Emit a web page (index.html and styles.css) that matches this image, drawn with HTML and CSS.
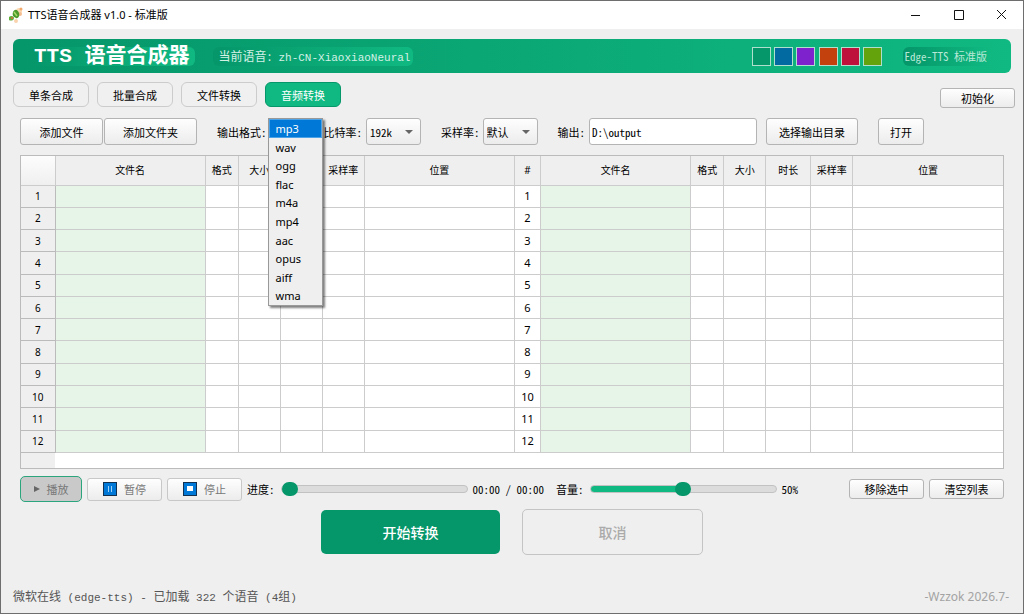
FILE: index.html
```html
<!DOCTYPE html>
<html lang="zh-CN">
<head>
    <meta charset="UTF-8">
    <meta name="viewport" content="width=device-width, initial-scale=1.0">
    <title>TTS语音合成器 v1.0 - 标准版</title>
    <link rel="stylesheet" href="styles.css">
</head>
<body>
    <header class="titlebar">
        <svg class="app-icon" width="16" height="16" viewBox="0 0 16 16">
            <circle cx="11" cy="4" r="3" fill="#fbd9b4"/>
            <circle cx="13" cy="2" r="1.5" fill="#f3a86c"/>
            <circle cx="12" cy="7" r="2" fill="#f6bd90"/>
            <path d="M5 5C7 1 10 3 11 6C12 9 10 12 8 11C5 10 4 8 5 5Z" fill="#4b9a2b"/>
            <path d="M6 5L9 9" stroke="#a9d86a" stroke-width="1.5"/>
            <path d="M1 10C3 8 6 9 6 11C6 14 2 14 1 13Z" fill="#5fae3c"/>
            <circle cx="4" cy="11" r="1" fill="#e8623c"/>
            <circle cx="8" cy="14" r="2" fill="#fad2ae"/>
        </svg>
        <h1>TTS语音合成器 v1.0 - 标准版</h1>
        <div class="window-controls">
            <button type="button" aria-label="最小化"><svg width="11" height="11" viewBox="0 0 11 11"><path d="M1 5.5H10"/></svg></button>
            <button type="button" aria-label="最大化"><svg width="11" height="11" viewBox="0 0 11 11"><path d="M1.5 .5H10.5V9.5H1.5Z"/></svg></button>
            <button type="button" aria-label="关闭"><svg width="11" height="11" viewBox="0 0 11 11"><path d="M1 0L10 9M10 0L1 9"/></svg></button>
        </div>
    </header>

    <main>
        <section class="banner">
            <h2>TTS 语音合成器</h2>
            <p class="voice">当前语音: <span class="latin">zh-CN-XiaoxiaoNeural</span></p>
            <div class="swatches">
                <button type="button" class="green" aria-label="绿色"></button>
                <button type="button" class="blue" aria-label="蓝色"></button>
                <button type="button" class="purple" aria-label="紫色"></button>
                <button type="button" class="orange" aria-label="橙色"></button>
                <button type="button" class="red" aria-label="红色"></button>
                <button type="button" class="lime" aria-label="青柠"></button>
            </div>
            <p class="edition">Edge-TTS 标准版</p>
        </section>

        <nav class="tabs">
            <button type="button" class="tab">单条合成</button>
            <button type="button" class="tab">批量合成</button>
            <button type="button" class="tab">文件转换</button>
            <button type="button" class="tab active">音频转换</button>
            <button type="button" class="btn small init">初始化</button>
        </nav>

        <div class="panel">
            <div class="toolbar">
                <div class="group add">
                    <button type="button" class="btn">添加文件</button>
                    <button type="button" class="btn wide">添加文件夹</button>
                </div>
                <div class="group format">
                    <label for="format">输出格式:</label>
                    <div class="combo">
                        <select id="format"><option>mp3</option></select>
                        <ul class="popup">
                            <li class="selected">mp3</li>
                            <li>wav</li>
                            <li>ogg</li>
                            <li>flac</li>
                            <li>m4a</li>
                            <li>mp4</li>
                            <li>aac</li>
                            <li>opus</li>
                            <li>aiff</li>
                            <li>wma</li>
                        </ul>
                    </div>
                    <label for="bitrate">比特率:</label>
                    <div class="combo bitrate">
                        <select id="bitrate"><option>192k</option></select>
                    </div>
                </div>
                <div class="group rate">
                    <label for="samplerate">采样率:</label>
                    <div class="combo">
                        <select id="samplerate"><option>默认</option></select>
                    </div>
                </div>
                <div class="group output">
                    <label for="output">输出:</label>
                    <input type="text" id="output" value="D:\output">
                    <button type="button" class="btn wide">选择输出目录</button>
                </div>
                <button type="button" class="btn open">打开</button>
            </div>

            <div class="table-frame">
                <table>
                    <colgroup>
                        <col class="c-index"><col><col class="c-format"><col class="c-num"><col class="c-num"><col class="c-num"><col>
                        <col class="c-hash"><col><col class="c-format"><col class="c-num"><col class="c-time"><col class="c-num"><col>
                    </colgroup>
                    <thead>
                        <tr>
                            <th class="corner"></th><th>文件名</th><th>格式</th><th>大小</th><th>时长</th><th>采样率</th><th>位置</th>
                            <th>#</th><th>文件名</th><th>格式</th><th>大小</th><th>时长</th><th>采样率</th><th>位置</th>
                        </tr>
                    </thead>
                    <tbody>
                        <tr><th>1</th><td class="name"></td><td></td><td></td><td></td><td></td><td></td><td>1</td><td class="name"></td><td></td><td></td><td></td><td></td><td></td></tr>
                        <tr><th>2</th><td class="name"></td><td></td><td></td><td></td><td></td><td></td><td>2</td><td class="name"></td><td></td><td></td><td></td><td></td><td></td></tr>
                        <tr><th>3</th><td class="name"></td><td></td><td></td><td></td><td></td><td></td><td>3</td><td class="name"></td><td></td><td></td><td></td><td></td><td></td></tr>
                        <tr><th>4</th><td class="name"></td><td></td><td></td><td></td><td></td><td></td><td>4</td><td class="name"></td><td></td><td></td><td></td><td></td><td></td></tr>
                        <tr><th>5</th><td class="name"></td><td></td><td></td><td></td><td></td><td></td><td>5</td><td class="name"></td><td></td><td></td><td></td><td></td><td></td></tr>
                        <tr><th>6</th><td class="name"></td><td></td><td></td><td></td><td></td><td></td><td>6</td><td class="name"></td><td></td><td></td><td></td><td></td><td></td></tr>
                        <tr><th>7</th><td class="name"></td><td></td><td></td><td></td><td></td><td></td><td>7</td><td class="name"></td><td></td><td></td><td></td><td></td><td></td></tr>
                        <tr><th>8</th><td class="name"></td><td></td><td></td><td></td><td></td><td></td><td>8</td><td class="name"></td><td></td><td></td><td></td><td></td><td></td></tr>
                        <tr><th>9</th><td class="name"></td><td></td><td></td><td></td><td></td><td></td><td>9</td><td class="name"></td><td></td><td></td><td></td><td></td><td></td></tr>
                        <tr><th>10</th><td class="name"></td><td></td><td></td><td></td><td></td><td></td><td>10</td><td class="name"></td><td></td><td></td><td></td><td></td><td></td></tr>
                        <tr><th>11</th><td class="name"></td><td></td><td></td><td></td><td></td><td></td><td>11</td><td class="name"></td><td></td><td></td><td></td><td></td><td></td></tr>
                        <tr><th>12</th><td class="name"></td><td></td><td></td><td></td><td></td><td></td><td>12</td><td class="name"></td><td></td><td></td><td></td><td></td><td></td></tr>
                    </tbody>
                </table>
            </div>

            <div class="player">
                <button type="button" class="btn play" disabled>
                    <svg width="6" height="8" viewBox="0 0 6 8"><path d="M0 1L6 4L0 7Z" fill="#666"/></svg>播放
                </button>
                <button type="button" class="btn media" disabled>
                    <svg width="14" height="14" viewBox="0 0 14 14"><rect x=".5" y=".5" width="13" height="13" fill="#0078d7" stroke="#12304f"/><path d="M5.5 4V10M8.5 4V10" stroke="#9fd0f5"/></svg>暂停
                </button>
                <button type="button" class="btn media" disabled>
                    <svg width="14" height="14" viewBox="0 0 14 14"><rect x=".5" y=".5" width="13" height="13" fill="#0078d7" stroke="#12304f"/><rect x="4" y="4" width="6" height="5" fill="#fff"/></svg>停止
                </button>
                <label for="progress">进度:</label>
                <input type="range" id="progress" min="0" max="100" value="0">
                <span class="time">00:00 / 00:00</span>
                <label for="volume">音量:</label>
                <input type="range" id="volume" class="half" min="0" max="100" value="50">
                <span>50%</span>
                <div class="list-actions">
                    <button type="button" class="btn small">移除选中</button>
                    <button type="button" class="btn small">清空列表</button>
                </div>
            </div>

            <div class="actions">
                <button type="button" class="start">开始转换</button>
                <button type="button" class="cancel" disabled>取消</button>
            </div>
        </div>
    </main>

    <footer>
        <p>微软在线<span class="latin"> (edge-tts) - </span>已加载<span class="latin"> 322 </span>个语音<span class="latin"> (4</span>组<span class="latin">)</span></p>
        <p class="author">-Wzzok 2026.7-</p>
    </footer>
</body>
</html>
```
FILE: styles.css
```css
* {
    margin: 0;
    padding: 0;
    box-sizing: border-box;
}
body {
    display: flex;
    flex-direction: column;
    min-height: 100vh;
    border: 1px solid #6e6e6e;
    background: #efefef;
    color: #000;
    font-family: "Noto Sans CJK SC", sans-serif;
    font-size: 11px;
    line-height: 16px;
    font-feature-settings: "hwid";
}
button, input, select {
    font: inherit;
    font-feature-settings: inherit;
    color: inherit;
}
h1, .popup, table, .author {
    font-family: "Noto Sans", "Noto Sans CJK SC", sans-serif;
    font-feature-settings: normal;
}
.latin {
    font-family: "Liberation Mono", monospace;
    font-size: 11px;
    font-feature-settings: normal;
    white-space: pre;
}

/* title bar */
.titlebar {
    display: flex;
    align-items: center;
    height: 28px;
    padding-left: 7px;
    background: #fff;
}
h1 {
    margin-left: 4px;
    font-size: 11px;
    font-weight: 400;
}
.window-controls {
    display: flex;
    margin-left: auto;
}
.window-controls button {
    display: flex;
    align-items: center;
    justify-content: center;
    width: 43px;
    height: 28px;
    border: none;
    background: none;
}
.window-controls svg {
    fill: none;
    stroke: #111;
}

main {
    padding: 10px 8px 0 12px;
}

/* green banner */
.banner {
    display: flex;
    align-items: center;
    height: 34px;
    margin-right: 4px;
    padding: 0 20px 0 16px;
    border-radius: 6px;
    background: linear-gradient(90deg, #059669, #10b981);
    color: #fff;
}
.banner h2, .voice, .edition {
    height: 19px;
    border-radius: 6px;
    background: linear-gradient(90deg, #059669, #10b981);
    line-height: 19px;
    white-space: nowrap;
}
.banner h2 {
    padding: 0 6px 0 5px;
    font-family: "Liberation Mono", "Noto Sans CJK SC", monospace;
    font-size: 21px;
    font-weight: 700;
}
.voice {
    margin-left: 18px;
    padding: 0 3px 0 5px;
    color: #d4f1e6;
    font-size: 12px;
    line-height: 18px;
}
.swatches {
    display: flex;
    justify-content: space-between;
    width: 131px;
    margin-left: auto;
}
.swatches button {
    width: 19px;
    height: 19px;
    border: 1px solid #b0dfce;
}
.green { background: #059669; }
.blue { background: #0369a1; }
.purple { background: #7e22ce; }
.orange { background: #c2410c; }
.red { background: #be123c; }
.lime { background: #65a30d; }
.edition {
    margin-left: 20px;
    padding: 0 4px 0 2px;
    color: #b9e8d7;
}

/* tabs */
.tabs {
    display: flex;
    gap: 8px;
    margin-top: 9px;
}
.tab {
    width: 76px;
    height: 25px;
    border: 1px solid #ccc;
    border-radius: 6px;
    background: #f0f0f0;
}
.tab.active {
    border-color: #059669;
    background: #10b981;
    color: #fff;
}
.init {
    margin: 6px 0 0 auto;
}

.btn {
    height: 27px;
    padding: 0 10px;
    border: 1px solid #b4b4b4;
    border-radius: 3px;
    background: linear-gradient(#fefefe, #ececec);
    white-space: nowrap;
}
.btn.small {
    width: 75px;
    height: 20px;
    line-height: 18px;
}

/* toolbar */
.panel {
    padding: 0 11px 0 7px;
}
.toolbar {
    display: flex;
    gap: 20px;
    margin-top: 10px;
}
.group {
    display: flex;
    align-items: center;
    gap: 4px;
    white-space: nowrap;
}
.add {
    gap: 1px;
}
.add .btn {
    width: 83px;
}
.add .btn.wide {
    width: 93px;
}
.format {
    gap: 1px;
}
.rate {
    gap: 3px;
}
.combo {
    position: relative;
    width: 55px;
}
.combo.bitrate {
    margin-left: 3px;
}
.combo::after {
    content: "";
    position: absolute;
    top: 12px;
    right: 8px;
    border: 4px solid transparent;
    border-top-color: #666;
    border-bottom: none;
}
.combo select {
    display: block;
    width: 55px;
    height: 27px;
    padding: 0 3px;
    appearance: none;
    border: 1px solid #b4b4b4;
    border-radius: 3px;
    background: linear-gradient(#fefefe, #ececec);
}
.popup {
    position: absolute;
    top: 0;
    left: 0;
    z-index: 1;
    display: flex;
    flex-direction: column;
    width: 55px;
    height: 188px;
    border: 1px solid #999;
    background: #efefef;
    box-shadow: 2px 2px 2px rgba(0, 0, 0, 0.5);
    list-style: none;
}
.popup li {
    flex: 1;
    padding-left: 7px;
    line-height: 20px;
    min-height: 0;
}
.popup .selected {
    background: #0078d7;
    outline: 1px solid #4da3e8;
    outline-offset: -1px;
    color: #fff;
}
#output {
    width: 168px;
    height: 27px;
    padding: 0 2px;
    border: 1px solid #b4b4b4;
    border-radius: 3px;
    background: #fff;
}
.output .btn {
    width: 92px;
    margin-left: 5px;
}
.open {
    width: 46px;
}

/* file list */
.table-frame {
    margin-top: 10px;
    padding-bottom: 15px;
    border: 1px solid #bbb;
    background: linear-gradient(90deg, #efefef 34px, #fff 34px);
}
table {
    width: 100%;
    height: 297px;
    table-layout: fixed;
    border-collapse: collapse;
    background: #fff;
}
.c-index { width: 34px; }
.c-format { width: 33px; }
.c-num { width: 42px; }
.c-time { width: 45px; }
.c-hash { width: 26px; }
th, td {
    border: 1px solid #ccc;
    line-height: 14px;
    text-align: center;
}
th {
    background: #efefef;
    font-weight: 400;
}
tr > :first-child {
    border-left: none;
}
tr > :last-child {
    border-right: none;
}
thead th {
    height: 29px;
    border-top: none;
    font-size: 10px;
    white-space: nowrap;
}
thead .corner {
    background: linear-gradient(#fdfdfd, #efefef);
}
tbody th {
    border-color: #bbb;
    font-size: 10px;
}
td.name {
    background: #e7f5e8;
}

/* player */
.player {
    display: flex;
    align-items: center;
    gap: 5px;
    margin-top: 7px;
    white-space: nowrap;
}
.player svg {
    margin-right: 7px;
}
.player .btn:disabled {
    display: flex;
    align-items: center;
    justify-content: center;
    color: #777;
}
.play {
    width: 62px;
    height: 26px;
    border: 1px solid #2aa57d;
    border-radius: 5px;
    background: #c9c9c9;
}
.media {
    width: 75px;
    height: 23px;
    border-color: #c8c8c8;
}
.player label {
    margin-right: 1px;
}
.time {
    margin-right: 7px;
}
input[type="range"] {
    flex: 0 1 187px;
    min-width: 0;
    height: 14px;
    appearance: none;
    background: none;
}
input[type="range"]::-webkit-slider-runnable-track {
    height: 8px;
    border: 1px solid #c2c2c2;
    border-radius: 4px;
    background: #dcdcdc;
}
input[type="range"].half::-webkit-slider-runnable-track {
    background: linear-gradient(90deg, #10b981 50%, #dcdcdc 50%);
}
input[type="range"]::-webkit-slider-thumb {
    width: 16px;
    height: 14px;
    margin-top: -4px;
    appearance: none;
    border-radius: 7px;
    background: #059669;
}
.list-actions {
    display: flex;
    gap: 5px;
    margin-left: auto;
}

.actions {
    display: flex;
    align-items: center;
    justify-content: center;
    gap: 22px;
    margin-top: 7px;
}
.actions button {
    border-radius: 5px;
    font-size: 14px;
    font-weight: 500;
}
.start {
    width: 179px;
    height: 44px;
    border: none;
    background: #059669;
    color: #fff;
}
.cancel {
    width: 181px;
    height: 46px;
    border: 1px solid #c4c4c4;
    background: #efefef;
    color: #aaa;
}

footer {
    display: flex;
    align-items: center;
    justify-content: space-between;
    margin-top: auto;
    padding: 0 14px 7px 12px;
    color: #555;
    font-size: 12px;
}
.author {
    color: #a3a3a3;
}
```
